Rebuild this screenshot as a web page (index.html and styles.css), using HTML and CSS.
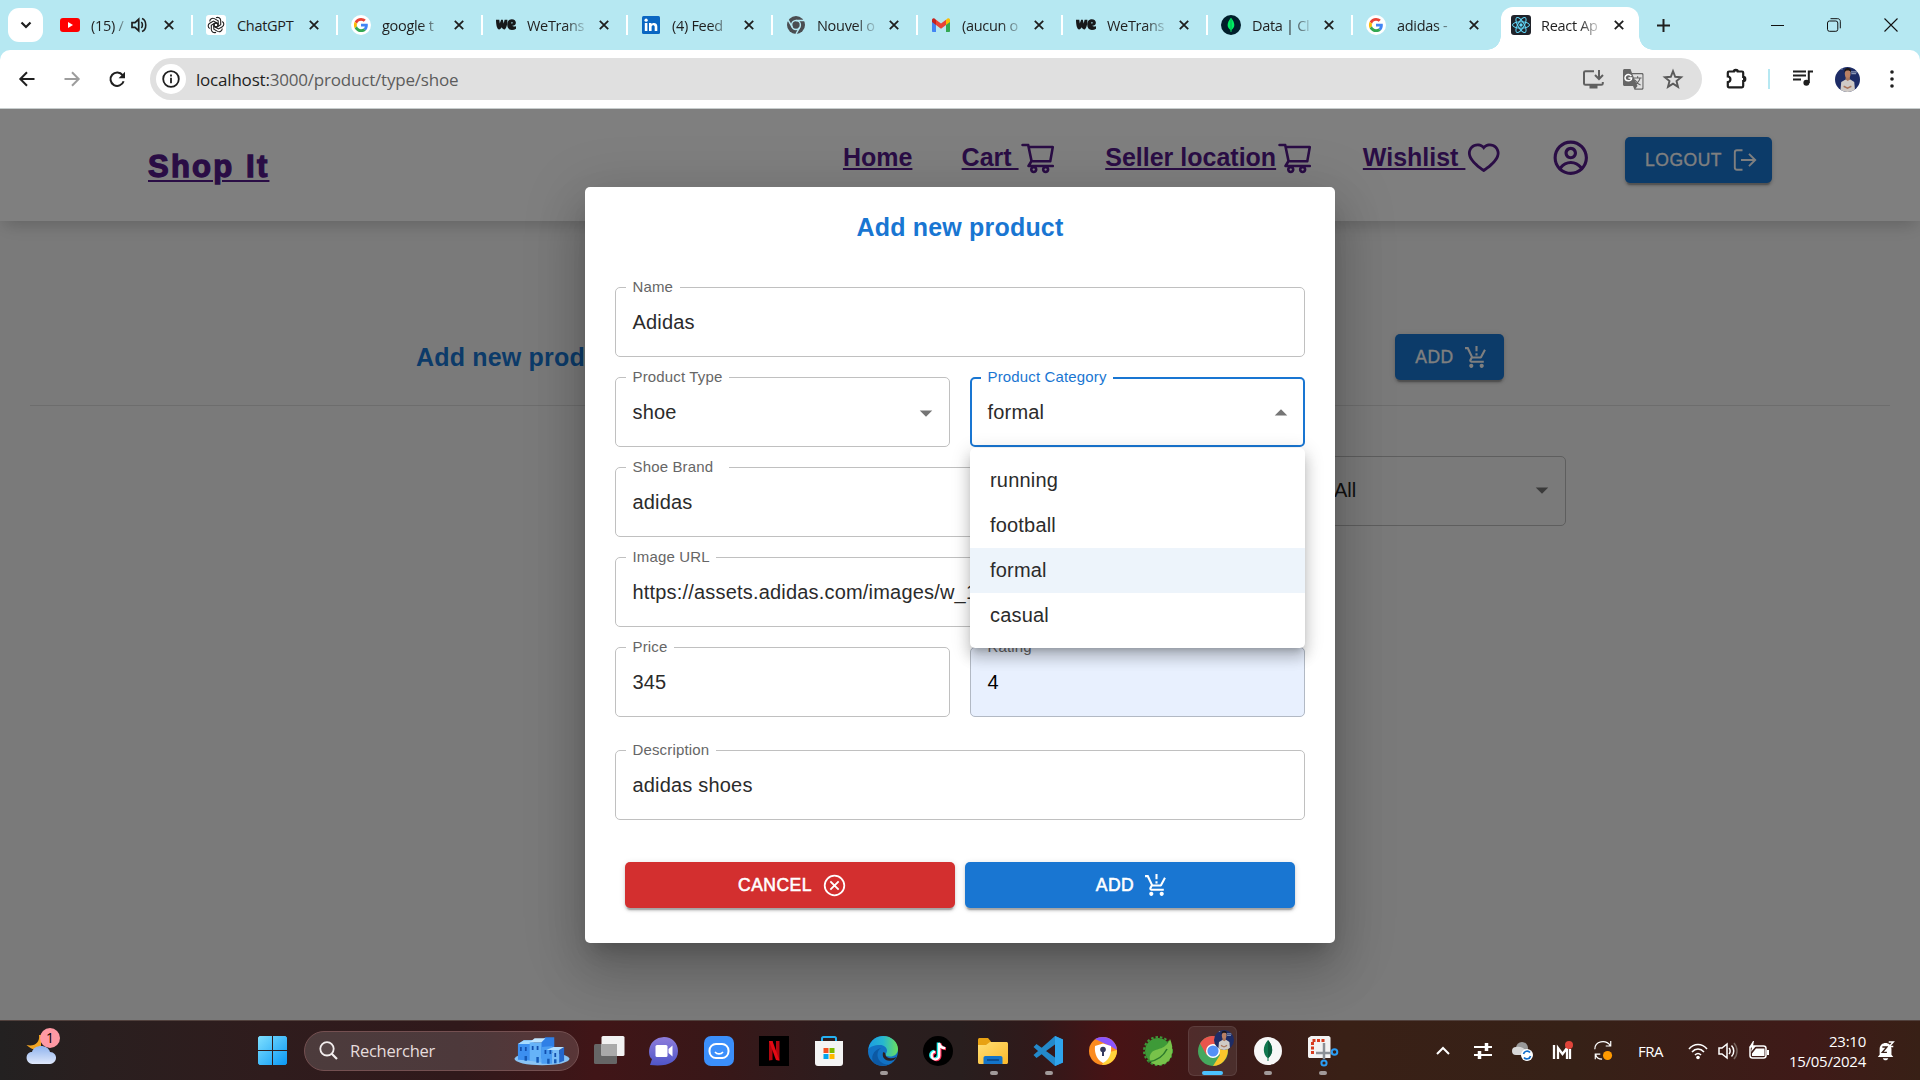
FILE: index.html
```html
<!DOCTYPE html>
<html lang="fr">
<head>
<meta charset="utf-8">
<title>React App</title>
<link rel="stylesheet" href="styles.css">
</head>
<body>
<svg class="defs" width="0" height="0" aria-hidden="true">
  <defs>
    <symbol id="x" viewBox="0 0 10 10"><path d="M.8.8l8.4 8.4M9.200.8L.8 9.200" stroke="#1f1f1f" stroke-width="1.800" fill="none"/></symbol>
    <symbol id="google" viewBox="0 0 48 48"><circle cx="24" cy="24" r="24" fill="#fff"/><g transform="translate(7 7) scale(.71)"><path fill="#ea4335" d="M24 9.500c3.540 0 6.710 1.220 9.210 3.600l6.850-6.850C35.900 2.380 30.470 0 24 0 14.620 0 6.510 5.380 2.560 13.220l7.980 6.190C12.430 13.720 17.740 9.500 24 9.500z"/><path fill="#4285f4" d="M46.980 24.550c0-1.570-.15-3.090-.38-4.550H24v9.020h12.940c-.58 2.960-2.260 5.480-4.780 7.180l7.730 6c4.510-4.180 7.090-10.360 7.090-17.650z"/><path fill="#fbbc05" d="M10.530 28.590c-.48-1.450-.76-2.990-.76-4.590s.27-3.140.76-4.590l-7.980-6.190C.92 16.460 0 20.120 0 24c0 3.880.92 7.540 2.560 10.780l7.970-6.190z"/><path fill="#34a853" d="M24 48c6.480 0 11.930-2.130 15.890-5.810l-7.730-6c-2.150 1.450-4.920 2.300-8.160 2.300-6.260 0-11.570-4.220-13.470-9.910l-7.980 6.190C6.510 42.620 14.620 48 24 48z"/></g></symbol>
    <symbol id="we" viewBox="0 0 20 12"><path d="M0 .8h3.300l.5 3.800L5.100.8h1.700l.9 3.800L8.600.8h2.800c0 5.500-1.300 9.600-3 9.600-1.100 0-2-.9-2.800-2.200-.7 1.300-1.500 2.200-2.500 2.200C1.200 10.400 0 6.400 0 .8z" fill="#17181a"/><path d="M15.800.2c2.600 0 4.100 1.500 4.100 3.600 0 1.900-1.300 2.900-3.600 3 .6.900 1.900.9 3.700.4v2.500c-1.100.8-2.500 1.200-4.100 1.200-3 0-4.700-2-4.700-5.300C11.200 2.400 12.900.2 15.800.2zm.2 2.900c-.6 0-.8.600-.7 1.500.9 0 1.300-.3 1.300-.9 0-.4-.2-.6-.6-.6z" fill="#17181a"/></symbol>
    <symbol id="cart" viewBox="0 0 1024 1024"><path d="M922.900 701.900H327.400l29.900-60.900 496.800-.9c16.800 0 31.200-12 34.200-28.600l68.800-385.100c1.800-10.100-.9-20.500-7.500-28.400a34.990 34.990 0 0 0-26.600-12.500l-632-2.100-5.400-25.400c-3.400-16.200-18-28-34.600-28H96.500a35.300 35.300 0 1 0 0 70.600h125.900L246 312.800l58.100 281.300-74.800 122.100a34.960 34.960 0 0 0-3 36.800c6 11.900 18.100 19.400 31.500 19.400h62.800a102.430 102.430 0 0 0-20.600 61.700c0 56.600 46 102.600 102.600 102.600s102.600-46 102.600-102.600c0-22.300-7.400-44-20.600-61.700h161.100a102.430 102.430 0 0 0-20.600 61.700c0 56.600 46 102.600 102.600 102.600s102.600-46 102.600-102.600c0-22.300-7.400-44-20.600-61.700H923c19.400 0 35.300-15.800 35.300-35.300a35.420 35.420 0 0 0-35.400-35.200zM305.700 253l575.800 1.900-56.400 315.800-452.300.8L305.700 253zm96.900 612.700c-17.400 0-31.600-14.200-31.600-31.600 0-17.400 14.200-31.600 31.600-31.600s31.600 14.200 31.600 31.600a31.600 31.600 0 0 1-31.600 31.600zm325.100 0c-17.400 0-31.600-14.200-31.600-31.600 0-17.400 14.200-31.600 31.600-31.600s31.600 14.200 31.600 31.600a31.600 31.600 0 0 1-31.600 31.600z" fill="currentColor"/></symbol>
    <symbol id="limits" viewBox="0 0 24 24"><path fill="currentColor" d="M13 10h-2V8h2v2zm0-4h-2V1h2v5zM7 18c-1.100 0-1.990.9-1.990 2S5.900 22 7 22s2-.9 2-2-.9-2-2-2zm10 0c-1.100 0-1.990.9-1.990 2s.89 2 1.990 2 2-.9 2-2-.9-2-2-2zm-8.900-5h7.450c.75 0 1.410-.41 1.750-1.030L21 4.960 19.250 4l-3.700 7H8.530L4.270 2H1v2h2l3.600 7.590-1.350 2.440C4.520 15.370 5.480 17 7 17h12v-2H7l1.100-2z"/></symbol>
    <symbol id="caret" viewBox="0 0 24 24"><path d="M7 10l5 5 5-5z" fill="currentColor"/></symbol>
    <symbol id="portrait" viewBox="0 0 26 26"><clipPath id="pc"><circle cx="13" cy="13" r="13"/></clipPath><g clip-path="url(#pc)"><path fill="#1d2c66" d="M0 0h26v26H0z"/><path d="M2 2h6M15 5h8M17 7h5" stroke="#8b97b5" stroke-width="1.300"/><path d="M5.500 26l1-10.500 4.500-2.500h5l4 2.500L21 26z" fill="#cfcac6"/><path d="M11 9h4.500v4l-2.200 1.600L11 13z" fill="#a9755c"/><ellipse cx="13.200" cy="7" rx="3" ry="4.200" fill="#b98064"/><path d="M9.800 6c-.3-4 1.200-5 3.500-5s3.800 1.400 3.300 5c-.8-2-1.300-2.400-3.300-2.400S10.300 4.200 9.800 6z" fill="#1c1617"/><path d="M9 20l4 2 4-2" stroke="#a9755c" stroke-width="1.500" fill="none"/></g></symbol>
    <linearGradient id="gWin" x1="0" y1="0" x2="1" y2="1"><stop stop-color="#7fe0ff"/><stop offset="1" stop-color="#0a98f5"/></linearGradient>
    <linearGradient id="gCloud" x1="0" y1="0" x2="0" y2="1"><stop stop-color="#8fb3ee"/><stop offset="1" stop-color="#dfe8fb"/></linearGradient>
    <linearGradient id="gChat" x1="0" y1="0" x2="0" y2="1"><stop stop-color="#8e7ddb"/><stop offset="1" stop-color="#4f55c8"/></linearGradient>
    <linearGradient id="gEdge" x1="0" y1="0" x2="1" y2="0"><stop stop-color="#1b9de2"/><stop offset=".5" stop-color="#27b7cf"/><stop offset="1" stop-color="#6be05c"/></linearGradient>
    <linearGradient id="gFold" x1="0" y1="0" x2="1" y2="1"><stop stop-color="#ffdf75"/><stop offset="1" stop-color="#fcb92a"/></linearGradient>
  </defs>
</svg>

<header class="tabstrip">
  <button class="tab-search"><svg width="12" height="8" viewBox="0 0 12 8"><path d="M1.500 1.500L6 6l4.500-4.500" stroke="#1f1f1f" stroke-width="2.200" fill="none"/></svg></button>
  <div class="tab first">
    <svg class="fav" viewBox="0 0 20 20"><rect y="3" width="20" height="14" rx="3" fill="#f00"/><path d="M8 7l5 3-5 3z" fill="#fff"/></svg>
    <span class="tab-text short">(15) /</span>
    <svg class="sound" width="16" height="16" viewBox="0 0 16 16"><path d="M1 5.700v4.600h3l3.700 3.400V2.300L4 5.700z" fill="none" stroke="#1f1f1f" stroke-width="1.700"/><path d="M10.300 5c1.500 1.200 1.500 4.800 0 6M11 1.500c5 2 5 11 0 13" fill="none" stroke="#1f1f1f" stroke-width="1.600"/></svg>
    <svg class="close"><use href="#x"/></svg>
  </div>
  <div class="tab">
    <svg class="fav" viewBox="0 0 20 20"><rect width="20" height="20" rx="3" fill="#fff"/><g fill="none" stroke="#222" stroke-width="1.100"><path id="knot" d="M10 2.800c2-1.200 4.600.2 4.700 2.600v4.400L10.500 12.300 7.600 10.700"/><use href="#knot" transform="rotate(60 10 10)"/><use href="#knot" transform="rotate(120 10 10)"/><use href="#knot" transform="rotate(180 10 10)"/><use href="#knot" transform="rotate(240 10 10)"/><use href="#knot" transform="rotate(300 10 10)"/></g></svg>
    <span class="tab-text full">ChatGPT</span><svg class="close"><use href="#x"/></svg>
  </div>
  <div class="tab"><svg class="fav"><use href="#google"/></svg><span class="tab-text">google t</span><svg class="close"><use href="#x"/></svg></div>
  <div class="tab"><svg class="fav"><use href="#we"/></svg><span class="tab-text">WeTrans</span><svg class="close"><use href="#x"/></svg></div>
  <div class="tab">
    <svg class="fav" viewBox="0 0 20 20"><rect x="1" y="1" width="18" height="18" rx="1.500" fill="#0a66c2"/><path d="M3.800 8h2.600v8H3.800zM8 8h2.500v1.200c1-2 5.800-2 5.800 2V16h-2.600v-4.200c0-2.300-3.100-2.100-3.100 0V16H8z" fill="#fff"/><circle cx="5.100" cy="5.200" r="1.600" fill="#fff"/></svg>
    <span class="tab-text">(4) Feed</span><svg class="close"><use href="#x"/></svg>
  </div>
  <div class="tab">
    <svg class="fav" viewBox="0 0 20 20"><circle cx="10" cy="10" r="9" fill="#4a4d51"/><circle cx="10" cy="10" r="4.400" fill="#4a4d51" stroke="#b6e8f2" stroke-width="1.500"/><path d="M10 5.600h8M6.200 12.200l-4-7M13.800 12.200L10 19" stroke="#b6e8f2" stroke-width="1.500"/></svg>
    <span class="tab-text">Nouvel o</span><svg class="close"><use href="#x"/></svg>
  </div>
  <div class="tab">
    <svg class="fav" viewBox="0 0 20 20"><path d="M1 5v11c0 .6.400 1 1 1h3V9z" fill="#4285f4"/><path d="M19 5v11c0 .6-.4 1-1 1h-3V9z" fill="#34a853"/><path d="M15 4.800l1.500-1.200C17.600 2.800 19 3.600 19 5v2l-4 3z" fill="#fbbc04"/><path d="M5 4.800L3.500 3.600C2.400 2.800 1 3.600 1 5v2l4 3z" fill="#c5221f"/><path d="M5 4.800l5 3.800 5-3.800V10l-5 3.800L5 10z" fill="#ea4335"/></svg>
    <span class="tab-text">(aucun o</span><svg class="close"><use href="#x"/></svg>
  </div>
  <div class="tab"><svg class="fav"><use href="#we"/></svg><span class="tab-text">WeTrans</span><svg class="close"><use href="#x"/></svg></div>
  <div class="tab">
    <svg class="fav" viewBox="0 0 20 20"><circle cx="10" cy="10" r="10" fill="#001e2b"/><path d="M10 2.800c4.600 5.400 4.200 9.900.4 12.200V17h-.8v-2C5.800 12.700 5.400 8.200 10 2.800z" fill="#00ed64"/><path d="M10 3v13" stroke="#00a84a" stroke-width=".8"/></svg>
    <span class="tab-text">Data | Cl</span><svg class="close"><use href="#x"/></svg>
  </div>
  <div class="tab last"><svg class="fav"><use href="#google"/></svg><span class="tab-text">adidas -</span><svg class="close"><use href="#x"/></svg></div>
  <div class="tab active">
    <svg class="fav" viewBox="0 0 20 20"><rect width="20" height="20" rx="3" fill="#20232a"/><g fill="none" stroke="#61dafb" stroke-width="1"><ellipse cx="10" cy="10" rx="8.500" ry="3.200"/><ellipse cx="10" cy="10" rx="8.500" ry="3.200" transform="rotate(60 10 10)"/><ellipse cx="10" cy="10" rx="8.500" ry="3.200" transform="rotate(120 10 10)"/></g><circle cx="10" cy="10" r="1.700" fill="#61dafb"/></svg>
    <span class="tab-text">React Ap</span><svg class="close"><use href="#x"/></svg>
  </div>
  <svg class="new-tab" width="13" height="13" viewBox="0 0 13 13"><path d="M6.500 0v13M0 6.500h13" stroke="#1f1f1f" stroke-width="2"/></svg>
  <div class="window-controls">
    <svg width="14" height="14" viewBox="0 0 14 14"><path d="M1 7.500h13" stroke="#111" stroke-width="1"/></svg>
    <svg width="14" height="14" viewBox="0 0 14 14"><rect x=".5" y="3" width="10.300" height="10.300" rx="2" fill="none" stroke="#111"/><path d="M3.500.700h7.200c1.500 0 2.600 1.100 2.600 2.600v7" fill="none" stroke="#111"/></svg>
    <svg width="14" height="14" viewBox="0 0 14 14"><path d="M.5.500l13 13M13.500.500l-13 13" stroke="#111" stroke-width="1.100"/></svg>
  </div>
</header>

<div class="toolbar-wrap">
<div class="toolbar">
  <svg class="nav-ic" width="16" height="16" viewBox="0 0 16 16"><path d="M15.500 8H1.500M8 1.200L1.300 8 8 14.800" stroke="#1f1f1f" stroke-width="2" fill="none"/></svg>
  <svg class="nav-ic" width="16" height="16" viewBox="0 0 16 16"><path d="M.5 8h14M8 1.200L14.700 8 8 14.800" stroke="#9d9d9d" stroke-width="2" fill="none"/></svg>
  <svg class="nav-ic" width="17" height="17" viewBox="0 0 17 17"><path d="M14.600 10.200A6.700 6.700 0 1 1 13.600 4.200L15 6" stroke="#1f1f1f" stroke-width="2" fill="none"/><path d="M16 .8v6.400H9.600z" fill="#1f1f1f"/></svg>
  <div class="omnibox">
    <span class="info"><svg width="18" height="18" viewBox="0 0 18 18"><circle cx="9" cy="9" r="7.800" fill="none" stroke="#1f1f1f" stroke-width="1.800"/><path d="M8.100 7.800h1.800v5.500H8.100zM8.100 4.500h1.800v1.900H8.100z" fill="#1f1f1f"/></svg></span>
    <span class="url"><b>localhost:</b>3000/product/type/shoe</span>
    <svg width="21" height="19" viewBox="0 0 21 19"><path d="M11 1.200H2.500C1.700 1.200 1 1.800 1 2.600v10.800c0 .8.700 1.400 1.500 1.400h15.800c.8 0 1.500-.6 1.500-1.400V12" fill="none" stroke="#606060" stroke-width="2"/><path d="M6.500 15h8v3.500h-8z" fill="#606060"/><path d="M16 0v8M12 5l4 4 4-4" fill="none" stroke="#606060" stroke-width="2"/></svg>
    <svg width="21" height="21" viewBox="0 0 21 21"><path d="M1.500 0h6L9 4h10c1 0 1.500.7 1.500 1.500v13.800c0 .9-.6 1.500-1.500 1.500h-7.500L10 17H1.500C.7 17 0 16.300 0 15.500v-14C0 .7.700 0 1.500 0z" fill="#666"/><path d="M9.400 5.200h9.100c.5 0 .9.400.9 1v12.300c0 .6-.4 1-.9 1h-6l2-2.500z" fill="#e0e0e0"/><path d="M10.600 9h8M14.600 7.300V9M17 9c-.5 3-2.600 5-5 6.500M12 11c1.500 2.500 3 4 5.600 5" stroke="#666" stroke-width="1.200" fill="none"/><path d="M8.300 7C5.500 4 2 6 2 8.700c0 3.700 6.600 4.500 6.600.3H5.400" stroke="#fff" stroke-width="1.500" fill="none"/></svg>
    <svg width="20" height="20" viewBox="0 0 20 20"><path d="M10 2.200l2.200 5.600 5.900.4-4.600 3.800 1.500 5.800-5-3.200-5 3.200L6.500 12 1.900 8.200l5.900-.4z" fill="none" stroke="#5a5a5a" stroke-width="1.900"/></svg>
  </div>
  <svg class="puzzle" width="22" height="22" viewBox="0 0 22 22"><path d="M3 3.500h4.800C7.800 1.200 11.800 1.200 11.800 3.500H16c.8 0 1.200.4 1.200 1.200v4.200c2.800 0 2.800 4.200 0 4.200v5c0 .8-.4 1.200-1.200 1.200H3c-.8 0-1.200-.4-1.200-1.200v-3.900c3.500-.3 3.500-5.400 0-5.700V4.700C1.800 3.900 2.200 3.500 3 3.500z" fill="none" stroke="#1f1f1f" stroke-width="2.200"/><path d="M7.500 3.500a2.300 2.500 0 0 1 4.600 0zM17 8.500a3 2.500 0 0 1 0 5z" fill="#1f1f1f"/></svg>
  <i class="tb-sep"></i>
  <svg class="queue" width="21" height="16" viewBox="0 0 21 16"><path d="M0 1.500h13M0 5.500h13M0 9.500h8M15.800 13V1.500H20" stroke="#1f1f1f" stroke-width="2" fill="none"/><circle cx="13.400" cy="12.800" r="3" fill="#1f1f1f"/></svg>
  <svg class="me" width="25" height="25"><use href="#portrait"/></svg>
  <svg class="dots" width="4" height="18" viewBox="0 0 4 18"><g fill="#1f1f1f"><circle cx="2" cy="2" r="1.800"/><circle cx="2" cy="9" r="1.800"/><circle cx="2" cy="16" r="1.800"/></g></svg>
</div>
</div>

<main class="page">
  <div class="site-header">
    <a class="brand">Shop It</a>
    <nav class="site-nav">
      <a><span>Home</span></a>
      <a><span>Cart&nbsp;</span><svg><use href="#cart"/></svg></a>
      <a><span>Seller location</span><svg><use href="#cart"/></svg></a>
      <a><span>Wishlist&nbsp;</span><svg viewBox="0 0 1024 1024"><path fill="currentColor" d="M923 283.600a260.040 260.040 0 0 0-56.900-82.800 264.400 264.400 0 0 0-84-55.500A265.340 265.340 0 0 0 679.700 125c-49.300 0-97.400 13.500-139.200 39-10 6.100-19.500 12.800-28.500 20.100-9-7.300-18.500-14-28.500-20.100-41.800-25.500-89.900-39-139.200-39-35.500 0-69.900 6.800-102.400 20.300-31.400 13-59.700 31.700-84 55.500a258.440 258.440 0 0 0-56.900 82.800c-13.900 32.300-21 66.600-21 101.900 0 33.300 6.800 68 20.300 103.300 11.300 29.500 27.500 60.100 48.200 91 32.800 48.900 77.900 99.900 133.900 151.600 92.800 85.700 184.700 144.900 188.600 147.300l23.700 15.200c10.500 6.700 24 6.700 34.500 0l23.700-15.200c3.900-2.500 95.700-61.600 188.600-147.300 56-51.700 101.100-102.700 133.900-151.600 20.700-30.900 37-61.500 48.200-91 13.500-35.300 20.300-70 20.300-103.300.1-35.300-7-69.600-20.900-101.900zM512 814.800S156 586.700 156 385.500C156 283.600 240.300 201 344.300 201c73.100 0 136.500 40.800 167.700 100.400C543.200 241.800 606.600 201 679.700 201c104 0 188.300 82.600 188.300 184.500 0 201.200-356 429.300-356 429.300z"/></svg></a>
      <a><svg viewBox="0 0 24 24"><path fill="currentColor" fill-rule="evenodd" d="M16 9C16 11.209 14.209 13 12 13C9.791 13 8 11.209 8 9C8 6.791 9.791 5 12 5C14.209 5 16 6.791 16 9ZM14 9C14 10.105 13.105 11 12 11C10.895 11 10 10.105 10 9C10 7.895 10.895 7 12 7C13.105 7 14 7.895 14 9Z"/><path fill="currentColor" fill-rule="evenodd" d="M12 1C5.925 1 1 5.925 1 12C1 18.075 5.925 23 12 23C18.075 23 23 18.075 23 12C23 5.925 18.075 1 12 1ZM3 12C3 14.090 3.713 16.014 4.908 17.542C6.552 15.389 9.146 14 12.065 14C14.945 14 17.509 15.353 19.157 17.458C20.313 15.944 21 14.052 21 12C21 7.029 16.971 3 12 3C7.029 3 3 7.029 3 12ZM12 21C9.850 21 7.876 20.246 6.328 18.988C7.594 17.181 9.691 16 12.065 16C14.408 16 16.483 17.152 17.754 18.921C16.194 20.219 14.188 21 12 21Z"/></svg></a>
    </nav>
    <button class="btn logout">LOGOUT<svg viewBox="0 0 25 25"><path d="M10.500 2.200H5c-1.300 0-2.200.9-2.200 2.200v15.200c0 1.300.9 2.200 2.200 2.200h5.500M9 12h14M17 5.800l6.200 6.200-6.200 6.200" fill="none" stroke="currentColor" stroke-width="1.900"/></svg></button>
  </div>
  <div class="add-row">
    <h2 class="title">Add new product</h2>
    <button class="btn">ADD<svg><use href="#limits"/></svg></button>
  </div>
  <div class="filter-row"><div class="filter">All<svg class="caret"><use href="#caret"/></svg></div></div>

  <div class="backdrop">
    <form class="dialog">
      <h2 class="title">Add new product</h2>
      <div class="fields">
        <fieldset class="wide"><legend>Name</legend><span>Adidas</span></fieldset>
        <fieldset><legend>Product Type</legend><span>shoe</span><svg class="caret"><use href="#caret"/></svg></fieldset>
        <fieldset class="focus"><legend>Product Category</legend><span>formal</span><svg class="caret up"><use href="#caret"/></svg></fieldset>
        <fieldset class="wide brand-field"><legend>Shoe Brand</legend><span>adidas</span></fieldset>
        <fieldset class="wide"><legend>Image URL</legend><span>https://assets.adidas.com/images/w_1</span></fieldset>
        <fieldset><legend>Price</legend><span>345</span></fieldset>
        <fieldset class="autofill"><legend>Rating</legend><span>4</span></fieldset>
        <fieldset class="wide desc"><legend>Description</legend><span>adidas shoes</span></fieldset>
      </div>
      <div class="actions">
        <button class="btn cancel" type="button">CANCEL<svg viewBox="0 0 24 24"><circle cx="12" cy="12" r="9.400" fill="none" stroke="currentColor" stroke-width="1.700"/><path d="M8 8l8 8M16 8l-8 8" stroke="currentColor" stroke-width="1.800"/></svg></button>
        <button class="btn" type="button">ADD<svg><use href="#limits"/></svg></button>
      </div>
      <ul class="menu"><li>running</li><li>football</li><li class="selected">formal</li><li>casual</li></ul>
    </form>
  </div>
</main>

<footer class="taskbar">
  <div class="weather"><svg width="31" height="38" viewBox="0 0 31 38"><path d="M13 8c1 7-4 12-12.500 10C5 22 10 25 15 20V8z" fill="#f3a522"/><path d="M6.500 37C-1.500 36-1 25 6 25c2-8 16-8 18 0 8 .5 8 11 0 12z" fill="url(#gCloud)"/></svg><b>1</b></div>
  <svg class="start" width="29" height="29" viewBox="0 0 29 29"><path d="M1.500 0H14v14H0V1.500zM15 0h12.500L29 1.500V14H15zM0 15h14v14H1.500L0 27.500zM15 15h14v12.500L27.500 29H15z" fill="url(#gWin)"/></svg>
  <div class="search">
    <svg width="19" height="19" viewBox="0 0 19 19"><circle cx="8" cy="7.800" r="6.700" fill="#ffffff10" stroke="#f3eeee" stroke-width="1.800"/><path d="M12.500 12.500l5.500 5.500" stroke="#f3eeee" stroke-width="2.200"/></svg>
    <span>Rechercher</span>
    <svg width="56" height="30" viewBox="0 0 57 30"><ellipse cx="28.500" cy="23" rx="28" ry="6.500" fill="#8ac4f5"/><path d="M4 8l6-4h10v21l-16-1z" fill="#3c8ff0"/><path d="M4 8l6-4h10l-4 4z" fill="#a6dbff"/><path d="M16 6h13v21l-13-2z" fill="#66b3f8"/><path d="M28 4l4-3h9v14l-13 8z" fill="#2f7fe6"/><path d="M16 6l5-4h11l-4 4z" fill="#c0e6ff"/><path d="M28 11l11-1v18H28z" fill="#4a9df3"/><path d="M39 14h7v13l-7 1z" fill="#79bdf8"/><path d="M46 14l5-3v14l-5 2z" fill="#2467cd"/><path d="M33 14l7-3h11l-5 3z" fill="#b5e0ff"/><path d="M7 11v4M12 11v4M19 10v4M24 10v4M32 14v4M37 14v4M42 17v4" stroke="#124fae" stroke-width="1.800"/><path d="M12 25v-5M24 27v-6M35 28v-5M42 27.500v-4" stroke="#1559b5" stroke-width="2.500"/></svg>
  </div>
  <div class="apps">
    <div><svg viewBox="0 0 30 30"><rect x="0" y="8" width="23" height="20" rx="1.500" fill="#666"/><rect x="7.500" y="0" width="23" height="20" rx="1.500" fill="#f2f2f2"/><path d="M7.500 8H23v12H7.500z" fill="#aaa"/></svg></div>
    <div><svg viewBox="0 0 30 30"><path d="M15 1C-2 2-2 20 3 23l-2 6c16 2 28-2 28-14C29 7 23 1 15 1z" fill="url(#gChat)"/><rect x="6.500" y="9" width="12" height="12" rx="1.500" fill="#fff"/><path d="M19.500 13l4-3.500v11l-4-3.500z" fill="#fff"/></svg></div>
    <div><svg viewBox="0 0 30 30"><rect width="30" height="30" rx="7" fill="#3b8ffb"/><rect x="5.500" y="8" width="19" height="14" rx="6.500" fill="none" stroke="#fff" stroke-width="2"/><path d="M11 16c2 2.500 6 2.500 8 0M15 22h4" stroke="#fff" stroke-width="1.600" fill="none"/></svg></div>
    <div><svg viewBox="0 0 30 30"><path fill="#000" d="M0 0h30v30H0z"/><path d="M10 5h3.500v19l-3.500.5zM17 5h3.500v19.500L17 24z" fill="#b1060f"/><path d="M10 5h3.500l7 19.500L17 24z" fill="#e50914"/></svg></div>
    <div><svg viewBox="0 0 30 30"><path d="M8 6V2.500C8 1.700 8.500 1 9.500 1h11c1 0 1.500.7 1.500 1.500V6" fill="none" stroke="#25b1f2" stroke-width="2"/><path d="M1 5h28v22c0 2-1 3-3 3H4c-2 0-3-1-3-3z" fill="#f4f4f4"/><path d="M9.500 12H14.500v5H9.500z" fill="#f25022"/><path d="M15.500 12h5v5h-5z" fill="#7fba00"/><path d="M9.500 18H14.500v5H9.500z" fill="#00a4ef"/><path d="M15.500 18h5v5h-5z" fill="#ffb900"/></svg></div>
    <div class="open"><svg viewBox="0 0 30 30"><circle cx="15" cy="15" r="15" fill="#1272c4"/><path d="M.5 13C2 3 10 0 15 0c9 0 15 6.500 15 13 0 5-4 7.500-8 7.500-3 0-4.500-1-4.500-2 0-1 1.500-1.500 1.500-4 0-3-3-5.500-7-5.500C6 9 2 11 .5 13z" fill="url(#gEdge)"/><path d="M13 12c-7 5-3 17 8 16.500-4 2-11 2-15-1.500-4-5-1-13 7-15z" fill="#0c59a4"/><path d="M17.500 18.500c0 3.500 6 5 11 2.500-1 2.500-4 4-7 3.800-5.500-.5-7.500-4-6.500-8.300 1-.5 2.500.5 2.500 2z" fill="#2e1e20"/></svg></div>
    <div><svg viewBox="0 0 30 30"><circle cx="15" cy="15" r="15" fill="#000"/><g fill="none" stroke-width="3"><path d="M15.200 6.500v12.500a3.800 3.800 0 1 1-4-3.800M15.200 6.500c.5 3 2.500 5 6 5.200" stroke="#25f4ee"/><path d="M17 7.500v12.500a3.800 3.800 0 1 1-4-3.800M17 7.500c.5 3 2.500 5 6 5.200" stroke="#fe2c55"/><path d="M16.200 7v12.500a3.800 3.800 0 1 1-4-3.800M16.200 7c.5 3 2.500 5 6 5.200" stroke="#fff" stroke-width="2.300"/></g></svg></div>
    <div class="open"><svg viewBox="0 0 30 30"><path d="M0 4c0-1.500.5-2 2-2h8l3 3.500V12H0z" fill="#e8a213"/><path d="M0 9h8l4-3h16c1.500 0 2 .5 2 2v18c0 1.500-.5 2-2 2H2c-1.500 0-2-.5-2-2z" fill="url(#gFold)"/><path d="M5.500 28v-6c0-1.200.8-2 2-2h15c1.200 0 2 .8 2 2v6z" fill="#1374c9"/><path d="M9 24h12" stroke="#0b4f93" stroke-width="2"/></svg></div>
    <div class="open"><svg viewBox="0 0 30 30"><path d="M22 0l8 3.500v23L22 30 .5 11l3-3L24 23V7L3.500 22l-3-3z" fill="#2489ca"/><path d="M22 0l8 3.500v23L22 30z" fill="#2fa4ec"/></svg></div>
    <div><svg viewBox="0 0 30 30"><circle cx="15" cy="15" r="14" fill="#fb8b1e"/><path d="M7 3c8-5 21-1 22 11l-7-4z" fill="#8a55ff"/><path d="M29 14c0 9-7 15-15 15l8-13z" fill="#ffd43b"/><path d="M15 27C7 23 6.500 14 7 10l8-2.500 8 2.500c.5 4 0 13-8 17z" fill="#fff"/><circle cx="15" cy="13.500" r="2.800" fill="#35395e"/><path d="M14 14h2v6h-2z" fill="#35395e"/></svg></div>
    <div><svg viewBox="0 0 30 30"><circle cx="15" cy="15" r="13" fill="#3e9a38"/><circle cx="15" cy="15" r="14" fill="none" stroke="#3e9a38" stroke-width="2" stroke-dasharray="2.500 2"/><path d="M27 3c4 9 4 24-10 26-10 1-13-8-8-13 5-4 14-2 18-13z" fill="#78c24a"/><path d="M5 26c8-1 15-5 19-13" stroke="#2d7a2c" stroke-width="1.600" fill="none"/></svg></div>
    <div class="open current"><svg viewBox="0 0 30 30"><circle cx="15" cy="15" r="15" fill="#34a04e"/><path d="M2 7.500C8-3 24-2 28.500 8H15l-6.500 11z" fill="#e8453c"/><path d="M28.500 8C33 18 26 30 15 30l7-11-7-11z" fill="#fbc116"/><circle cx="15" cy="15" r="7" fill="#fff"/><circle cx="15" cy="15" r="5.600" fill="#4285f4"/></svg><svg class="mini"><use href="#portrait"/></svg></div>
    <div class="open"><svg viewBox="0 0 30 30"><circle cx="15" cy="15" r="14" fill="#f7f7f7"/><path d="M15 4c6 7 5 14 .5 18v3h-1v-3C10 18 9 11 15 4z" fill="#10774f"/><path d="M15 4c6 7 5 14 0 18z" fill="#0a5b3c"/></svg></div>
    <div class="open"><svg viewBox="0 0 30 30"><path d="M3 0h18l1.500 1.500V22H2c-1.500 0-2-.5-2-2V2z" fill="#f3f3f3"/><path d="M4.500 18V4.500H17" fill="none" stroke="#d83b1f" stroke-width="3" stroke-dasharray="3 1.500"/><path d="M16 7v16M8 17h17" stroke="#8b9096" stroke-width="2.500"/><circle cx="26.500" cy="16" r="2.800" fill="none" stroke="#2a9df4" stroke-width="2"/><circle cx="16" cy="27" r="2.600" fill="none" stroke="#2a9df4" stroke-width="2"/></svg></div>
  </div>
  <div class="tray">
    <svg class="chev" viewBox="0 0 14 10"><path d="M1 8l6-6 6 6" stroke="#fff" stroke-width="2" fill="none"/></svg>
    <svg class="w18" viewBox="0 0 18 16"><path d="M0 4h18M0 12h18" stroke="#fff" stroke-width="2"/><path d="M12.500 0v8M5.500 8v8" stroke="#fff" stroke-width="3.500"/></svg>
    <svg class="w21" viewBox="0 0 21 20"><circle cx="10" cy="7" r="6" fill="#999"/><path d="M4 14a4 4 0 0 1 0-8c4-1 8 1 9 3v5z" fill="#d8d8d8"/><circle cx="15" cy="14" r="6" fill="#fff"/><path d="M11.500 13a3.700 3.700 0 0 1 6.500-1.500M18.500 15a3.700 3.700 0 0 1-6.500 1.500" stroke="#0f6cc9" stroke-width="1.700" fill="none"/></svg>
    <svg viewBox="0 0 20 20"><path d="M1 4v14M5 18V7l4.500 6L14 7v11M17 8v10" fill="none" stroke="#fff" stroke-width="2.300"/><circle cx="16" cy="4" r="4" fill="#e0443a"/></svg>
    <svg viewBox="0 0 20 22"><path d="M1 9C1 0 13-2 18 5M18.500 0v5.500H13M9 20C5 20 2.500 17.500 2 15M1.500 20v-5.500H7" fill="none" stroke="#fff" stroke-width="1.300"/><circle cx="15" cy="16" r="5" fill="#f90"/></svg>
    <span class="lang">FRA</span>
    <svg viewBox="0 0 20 18"><path d="M1 7c5-6 13-6 18 0M4 10c3.500-4 8.500-4 12 0M7 13c2-2 4-2 6 0" fill="none" stroke="#fff" stroke-width="1.600"/><circle cx="10" cy="15.500" r="1.800" fill="#fff"/></svg>
    <svg viewBox="0 0 20 18"><path d="M1 6v6h3l5 4V2L4 6z" fill="none" stroke="#fff" stroke-width="1.500"/><path d="M11 6c1.500 1.500 1.500 4.500 0 6M13.500 3.500c3 3 3 8 0 11" fill="none" stroke="#fff" stroke-width="1.500"/><path d="M16 1c4 4.500 4 11.500 0 16" fill="none" stroke="#76655e" stroke-width="1.500"/></svg>
    <svg class="w21" viewBox="0 0 21 18"><rect x="2" y="4" width="16" height="12" rx="2.500" fill="none" stroke="#fff" stroke-width="1.500"/><path d="M8 6.500h8.500v7.500H4v-2.500zM19 8h2v5h-2z" fill="#fff"/><path d="M5-1L1 5.500h3L3 10l5-6H5l1-5z" fill="#fff"/></svg>
    <div class="clock"><span>23:10</span><span>15/05/2024</span></div>
    <svg class="w18" viewBox="0 0 18 22"><path d="M2 9c0-9 13-9 13 0v6l2 2.500H0L2 15zM5.500 19h6c-1 3-5 3-6 0z" fill="#fff"/><path d="M5 6.500h5l-5 6h5" stroke="#3a2018" stroke-width="1.600" fill="none"/><path d="M12 1h5l-4.500 5H17" stroke="#fff" stroke-width="1.600" fill="none"/></svg>
  </div>
</footer>
</body>
</html>
```

FILE: styles.css
```css
* { box-sizing: border-box; }
body { margin: 0; width: 1920px; height: 1080px; overflow: hidden; display: flex; flex-direction: column; font-family: "Liberation Sans", Arial, sans-serif; }
.defs { position: absolute; }
svg { display: block; flex: none; overflow: visible; }
button { border: 0; font-family: inherit; padding: 0; }

/* Browser tabs */
.tabstrip { height: 50px; background: #b6e8f2; display: flex; align-items: center; padding-left: 8px; font-family: "Open Sans", sans-serif; }
.tab-search { width: 35px; height: 34px; border-radius: 11px; background: #fff; display: grid; place-items: center; margin-right: 5px; }
.tab { width: 145px; height: 20px; padding: 0 17px 0 13px; display: flex; align-items: center; border-right: 2px solid #fff; }
.tab .fav { width: 20px; height: 20px; margin-right: 11px; }
.tab.first { padding-left: 12px; }
.tab-text { width: 62px; margin-right: auto; white-space: nowrap; font-size: 14.5px; letter-spacing: -.3px; line-height: 22px; padding-top: 1px; color: #1f1f1f; -webkit-mask-image: linear-gradient(90deg, #000 62%, transparent); mask-image: linear-gradient(90deg, #000 62%, transparent); }
.tab-text.full { -webkit-mask-image: none; mask-image: none; }
.tab-text.short { width: 38px; }
.sound { margin-right: 17px; }
.close { width: 10px; height: 10px; }
.tab.last { border-color: transparent; margin-right: 3px; }
.tab.active { position: relative; width: 138px; height: 43px; align-self: flex-end; background: #fff; border: 0; border-radius: 12px 12px 0 0; padding: 0 15px 7px 10px; }
.tab.active .fav { margin-right: 10px; }
.tab.active::before, .tab.active::after { content: ""; position: absolute; bottom: 0; width: 14px; height: 14px; }
.tab.active::before { right: 100%; background: radial-gradient(circle at 0 0, transparent 13.5px, #fff 14px); }
.tab.active::after { left: 100%; background: radial-gradient(circle at 100% 0, transparent 13.5px, #fff 14px); }
.new-tab { margin-left: 18px; }
.window-controls { display: flex; gap: 43px; margin: 0 22px 0 auto; }

/* Browser toolbar */
.toolbar-wrap { background: #b6e8f2; }
.toolbar { height: 59px; background: #fff; border-bottom: 1px solid #c7cdcd; border-radius: 10px 10px 0 0; display: flex; align-items: center; padding-left: 19px; }
.nav-ic { margin-right: 29px; }
.nav-ic:nth-child(3) { margin-right: 24px; }
.omnibox { width: 1552px; height: 42px; border-radius: 21px; background: #e0e0e0; display: flex; align-items: center; gap: 19px; padding: 0 19px 0 6px; font-family: "Open Sans", sans-serif; }
.info { width: 30px; height: 30px; border-radius: 50%; background: #fff; display: grid; place-items: center; margin-right: -9px; }
.url { margin-right: auto; font-size: 17px; letter-spacing: -.2px; color: #5c5c5c; }
.url b { font-weight: 400; color: #1f1f1f; }
.puzzle { margin-left: 24px; }
.tb-sep { width: 2px; height: 20px; background: #b6e8f2; margin-left: 20px; }
.queue { margin-left: 23px; margin-top: -2px; }
.me { margin-left: 21px; }
.dots { margin-left: 30px; }

/* Shop page */
.page { position: relative; height: 911px; background: #f4f4f4; overflow: hidden; }
.site-header { height: 112px; background: #fff; display: flex; align-items: flex-start; padding: 28px 148px 0; box-shadow: 0 10px 16px -6px rgba(0,0,0,.14), 0 3px 14px rgba(0,0,0,.05); position: relative; }
.brand { font-weight: 700; font-size: 31px; letter-spacing: 2.2px; word-spacing: 1px; line-height: 36px; margin-top: 12px; color: #551a8b; -webkit-text-stroke: 1.3px #551a8b; text-decoration: underline; text-decoration-thickness: 2px; text-underline-offset: 2.5px; }
.site-nav { margin: 1.500px -.5px 0 auto; display: flex; gap: 49.200px; height: 38px; }
.site-nav a { display: flex; align-items: center; color: #551a8b; font-weight: 700; font-size: 25px; }
.site-nav span { text-decoration: underline; text-decoration-thickness: 2px; text-underline-offset: 2px; margin-top: -1px; }
.site-nav svg { width: 37.500px; height: 37.500px; }
.btn { height: 46px; background: #1976d2; border-radius: 5px; color: #fff; display: flex; align-items: center; justify-content: center; padding: 0 15px 0 20px; font-size: 17.5px; letter-spacing: .5px; -webkit-text-stroke: .3px currentColor; box-shadow: 0 4px 1px -2px rgba(0,0,0,.2), 0 2.5px 2.5px rgba(0,0,0,.14), 0 1px 6px rgba(0,0,0,.12); }
.btn svg { width: 25px; height: 25px; margin-left: 10px; -webkit-text-stroke: 0; }
.logout { margin-left: 36px; }
.title { margin: 0; font-size: 25px; line-height: 40px; letter-spacing: .1875px; color: #1976d2; font-weight: 700; }
.add-row { margin: 0 30px; height: 185px; border-bottom: 1px solid #dadada; padding: 113px 386px 0 386px; display: flex; justify-content: space-between; }
.add-row .title { margin-top: 3px; }
.add-row .btn { width: 109px; }
.filter-row { display: flex; justify-content: flex-end; padding: 50px 354px 0 0; }
.filter { width: 250px; height: 70px; border: 1px solid #bcbcbc; border-radius: 5px; display: flex; align-items: center; justify-content: space-between; padding: 0 8px 2px 17px; font-size: 20px; color: #222; }
.caret { width: 30px; height: 30px; color: #757575; }

/* Dialog */
.backdrop { position: absolute; inset: 0; background: rgba(0,0,0,.5); }
.dialog { position: relative; width: 750px; height: 756px; margin: 78px auto 0; padding: 20px 30px; background: #fff; border-radius: 5px; box-shadow: 0 14px 19px -9px rgba(0,0,0,.2), 0 30px 48px 4px rgba(0,0,0,.14), 0 11px 58px 10px rgba(0,0,0,.12); }
.dialog .title { text-align: center; height: 52px; }
.fields { display: grid; grid-template-columns: 1fr 1fr; column-gap: 20px; row-gap: 12px; padding-top: 20px; }
fieldset { margin: 0; min-width: 0; height: 78px; border: 1px solid #c0c0c0; border-radius: 5px; padding: 0 8px 0 10px; display: flex; align-items: center; font-size: 20px; letter-spacing: .1875px; color: #2b2b2b; }
fieldset span { flex: 1; padding-left: 6.5px; margin-bottom: 7px; white-space: nowrap; }
fieldset .caret { margin-bottom: 6px; }
fieldset .caret.up { transform: rotate(180deg); }
legend { padding: 0 6.5px 2px; font-size: 15px; line-height: 15px; letter-spacing: .15px; color: #666; }
.wide { grid-column: span 2; }
.brand-field legend { width: 103px; }
.focus { border: 2px solid #1976d2; padding: 0 7px 0 9px; }
.focus legend { color: #1976d2; width: 132px; white-space: nowrap; }
.autofill { background: #e8f0fe; border-color: #b2b9c4; color: #000; }
.desc { margin-top: 13px; }
.actions { display: grid; grid-template-columns: 1fr 1fr; gap: 10px; padding: 42px 10px 0; }
.actions .btn { -webkit-text-stroke: .55px currentColor; }
.actions .cancel { background: #d32f2f; }
.menu { position: absolute; left: 385px; top: 261px; width: 335px; margin: 0; padding: 10px 0; list-style: none; background: #fff; border-radius: 5px; font-size: 20px; letter-spacing: .1875px; color: #2b2b2b; box-shadow: 0 6px 6px -4px rgba(0,0,0,.2), 0 10px 13px 1px rgba(0,0,0,.14), 0 4px 18px 3px rgba(0,0,0,.12); }
.menu li { height: 45px; line-height: 44px; padding-left: 20px; }
.menu .selected { background: #edf4fb; }

/* Taskbar */
.taskbar { height: 60px; border-top: 1px solid #51413d; background: linear-gradient(90deg, #232121 0, #2a1f1f 5%, #2f1c1d 14%, #30191b 24%, #401517 31%, #391718 37%, #2c1d1e 44%, #281e1e 50%, #30191a 54%, #481315 58%, #3a1a18 64%, #392016 70%, #362117 82%, #3f1a18 94%, #382016 100%); display: flex; align-items: center; color: #fff; font-family: "Open Sans", sans-serif; }
.weather { position: relative; width: 31px; height: 38px; margin: -9px 0 0 26px; }
.weather b { position: absolute; left: 14px; top: 1px; width: 20px; height: 20px; border-radius: 50%; background: #ff99a4; color: #000; font: 400 14px/20px "Open Sans", sans-serif; text-align: center; }
.start { margin-left: 201px; }
.search { width: 275px; height: 40px; margin: 0 2.500px 0 17px; border: 1px solid #745051; border-radius: 20px; background: rgba(255,255,255,.14); display: flex; align-items: center; padding: 0 8px 0 14px; }
.search span { margin: 0 auto 0 12px; font-size: 16.5px; letter-spacing: -.25px; color: #e6dddd; }
.apps { display: flex; }
.apps div { position: relative; width: 54.900px; height: 50px; display: grid; place-items: center; }
.apps svg { width: 30px; height: 30px; }
.apps .open::after { content: ""; position: absolute; bottom: 1px; left: 24px; width: 8px; height: 4px; border-radius: 2px; background: #a19a9a; }
.apps .current::before { content: ""; position: absolute; left: 3px; right: 3px; top: 0; bottom: 0; border-radius: 6px; background: rgba(255,255,255,.09); border: 1px solid rgba(255,255,255,.08); }
.apps .current::after { left: 17px; width: 21px; background: #4cc2ff; }
.apps .mini { position: absolute; width: 20px; height: 20px; left: 29px; top: 4px; }
.tray { display: flex; align-items: center; gap: 20px; margin: 0 25px 0 auto; }
.tray svg { width: 20px; height: 20px; }
.tray .chev { width: 14px; margin-right: 4px; }
.tray .w18 { width: 18px; }
.tray .w21 { width: 21px; }
.lang { font-size: 15px; letter-spacing: -.4px; width: 25px; margin: 0 15px 0 5px; white-space: nowrap; }
.tray .lang ~ svg { margin-left: -10px; }
.clock { display: flex; flex-direction: column; align-items: flex-end; font-size: 15px; line-height: 20px; letter-spacing: -.25px; margin-right: 1px; }
```
